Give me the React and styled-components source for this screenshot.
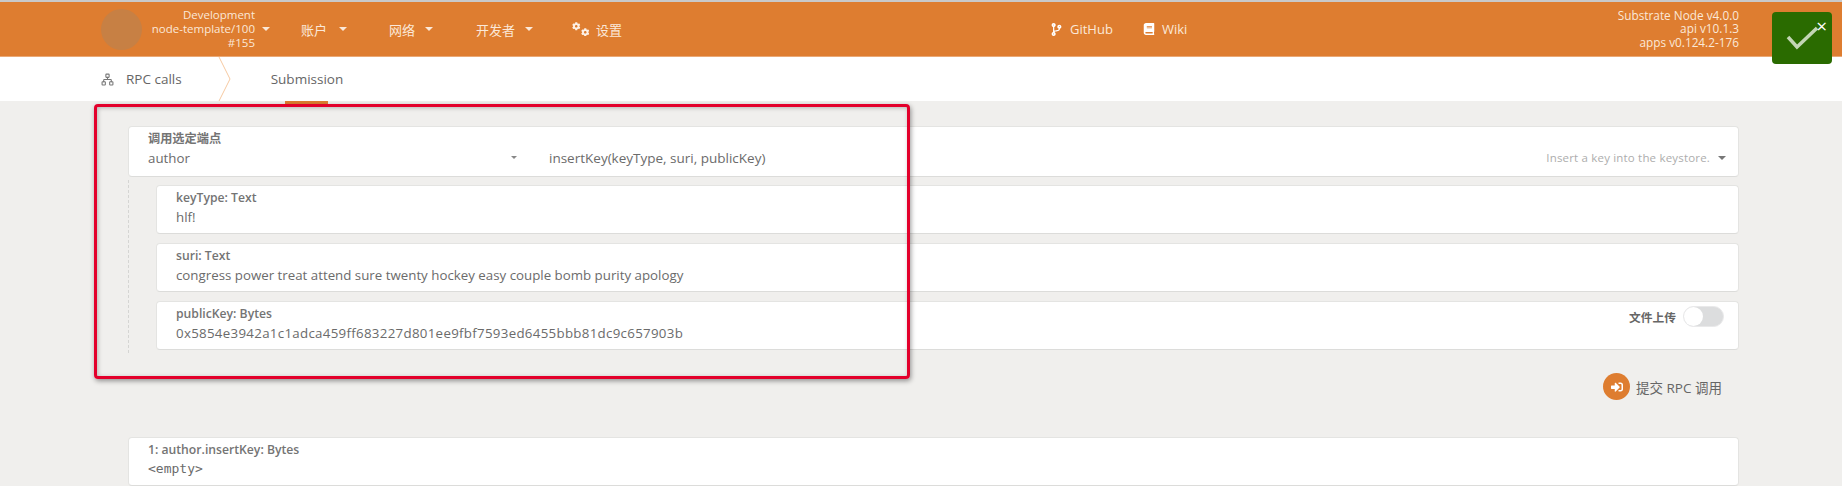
import React from 'react';
import styled, {createGlobalStyle} from 'styled-components';
import {FaBook, FaCodeBranch, FaCog, FaSignInAlt} from 'react-icons/fa';
import {Network} from 'lucide-react';

const GlobalStyle = createGlobalStyle`
    html, body {
        margin: 0;
        height: 486px;
        overflow: hidden;
        background: #f0efed;
        font-family: "Open Sans", "Noto Sans CJK SC", sans-serif;
        color: #6b6b6b;
    }
`

const Page = styled.div`
    position: relative;
    width: 1842px;
    height: 486px;
    overflow: hidden;
`

const Header = styled.header`
    display: flex;
    align-items: center;
    height: 54px;
    padding-left: 101px;
    border-top: 2px solid #c9c9c9;
    border-bottom: 1px solid #eaa976;
    background: #de7d30;
    color: #fbe8d8;
    font-size: 13px;
`

const Avatar = styled.div`
    width: 41px;
    height: 41px;
    border-radius: 50%;
    background: #c78044;
    flex: none;
`

const ChainInfo = styled.div`
    width: 113px;
    text-align: right;
    font-size: 11.5px;
    line-height: 14px;
`

const Caret = styled.span`
    display: inline-block;
    flex: none;
    width: 0;
    height: 0;
    margin-left: ${p => p.$gap || 0}px;
    margin-bottom: ${p => p.$bottom || 0}px;
    border-left: ${p => p.$size || 4.5}px solid transparent;
    border-right: ${p => p.$size || 4.5}px solid transparent;
    border-top: ${p => p.$size || 4.5}px solid ${p => p.$color || '#fbe8d8'};
`

const NavItem = styled.div`
    display: flex;
    align-items: center;
    flex: none;
    width: ${p => p.$width}px;
    gap: 7px;
    font-size: 13px;
`

const Gears = styled.span`
    display: flex;
    justify-content: space-between;
    width: 17px;
    height: 14px;
    color: #fdf1e6;

    svg:first-child {
        align-self: flex-start;
    }

    svg:last-child {
        align-self: flex-end;
    }
`

const Spacer = styled.div`
    width: ${p => p.$width}px;
    flex: none;
`

const Versions = styled.div`
    width: 551px;
    flex: none;
    text-align: right;
    font-size: 11.8px;
    line-height: 13.5px;
`

const Tabs = styled.nav`
    display: flex;
    align-items: center;
    height: 44px;
    padding-left: 101px;
    background: #fff;
    font-size: 13.5px;
    color: #666;
`

const Tab = styled.div`
    position: relative;
    display: flex;
    align-items: center;
    height: 100%;
    gap: 12px;
    margin-left: ${p => p.$offset || 0}px;

    ${p => p.$active && `
        &::after {
            content: "";
            position: absolute;
            left: 14px;
            right: 15px;
            bottom: -3px;
            height: 3px;
            background: #de7d30;
        }
    `}
`

const Chevron = styled.svg`
    flex: none;
    width: 13px;
    height: 44px;
    margin-left: 36px;
`

const Main = styled.main`
    padding: 25px 103px 0 128px;
`

const Card = styled.div`
    position: relative;
    box-sizing: border-box;
    height: ${p => p.$height || 49}px;
    padding: 4px 16px 0 19px;
    border: 1px solid #e4e4e2;
    border-bottom-color: #dcdcda;
    border-radius: 4px;
    background: #fff;
`

const Label = styled.div`
    font-size: 12.2px;
    font-weight: 600;
    line-height: 16px;
    color: #747474;
`

const Value = styled.div`
    margin-top: 1px;
    font-size: 13.3px;
    line-height: 20px;
    color: #6b6b6b;
`

const Hash = styled(Value)`
    letter-spacing: 0.3px;
`

const Mono = styled(Value)`
    font-family: "DejaVu Sans Mono", "Liberation Mono", monospace;
    font-size: 13px;
`

const SelectRow = styled.div`
    display: flex;
    align-items: flex-end;
    margin-right: -4px;
`

const Section = styled.div`
    width: 363px;
    flex: none;
`

const Method = styled(Value)`
    flex: 1;
    margin-top: 0;
    font-size: 13.5px;
`

const Hint = styled.span`
    margin-right: 8px;
    font-size: 11.5px;
    line-height: 20px;
    letter-spacing: 0.18px;
    color: #adadad;
`

const Params = styled.div`
    display: flex;
    flex-direction: column;
    gap: 9px;
    margin-top: 3px;
    padding: 5px 0 3px 27px;
    border-left: 1px dashed #d5d5d3;
`

const SwitchRow = styled.div`
    position: absolute;
    top: 4px;
    right: 14px;
    display: flex;
    align-items: center;
    gap: 7px;
    font-size: 11.75px;
    font-weight: 600;
    color: #666;
`

const Switch = styled.div`
    position: relative;
    box-sizing: border-box;
    width: 41px;
    height: 21px;
    border: 1px solid #e9e9ea;
    border-radius: 11px;
    background: #dcddde;

    &::before {
        content: "";
        position: absolute;
        left: 0;
        top: 0;
        width: 19px;
        height: 19px;
        border-radius: 50%;
        background: #fff;
    }
`

const Actions = styled.div`
    display: flex;
    justify-content: flex-end;
    align-items: center;
    gap: 6px;
    margin-top: 20px;
    padding-right: 17px;
    font-size: 13.5px;
    color: #666;
`

const RoundIcon = styled.div`
    display: flex;
    align-items: center;
    justify-content: center;
    width: 27px;
    height: 27px;
    border-radius: 50%;
    background: #de7d30;
    color: #fff;
    font-size: 12px;
`

const Result = styled(Card)`
    margin-top: 37px;
`

const Highlight = styled.div`
    position: absolute;
    left: 94px;
    top: 104px;
    width: 816px;
    height: 275px;
    box-sizing: border-box;
    border: 3px solid #e3002b;
    border-radius: 4px;
    box-shadow: 1px 2px 5px rgba(0, 0, 0, 0.4), inset 1px 1px 4px rgba(0, 0, 0, 0.25);
    pointer-events: none;
`

const Toast = styled.div`
    position: absolute;
    left: 1772px;
    top: 12px;
    width: 60px;
    height: 52px;
    border-radius: 4px;
    background: #2a6b00;
`

const Close = styled.span`
    position: absolute;
    top: 4px;
    right: 5px;
    font-size: 19px;
    line-height: 20px;
    color: #fff;
`

const App = () => {
    return (
        <Page>
            <GlobalStyle/>
            <Header>
                <Avatar/>
                <ChainInfo>
                    <div>Development</div>
                    <div>node-template/100</div>
                    <div>#155</div>
                </ChainInfo>
                <Caret $gap={7}/>
                <Spacer $width={31}/>
                <NavItem $width={88}>账户<Caret $gap={5}/></NavItem>
                <NavItem $width={87}>网络<Caret $gap={3}/></NavItem>
                <NavItem $width={96}>开发者<Caret $gap={3}/></NavItem>
                <NavItem $width={478}><Gears><FaCog size={8.5}/><FaCog size={8.5}/></Gears>设置</NavItem>
                <NavItem $width={93}><FaCodeBranch size={13} color="#fff"/>GitHub</NavItem>
                <NavItem $width={45}><FaBook size={12} color="#fff"/>Wiki</NavItem>
                <Versions>
                    <div>Substrate Node v4.0.0</div>
                    <div>api v10.1.3</div>
                    <div>apps v0.124.2-176</div>
                </Versions>
            </Header>
            <Tabs>
                <Tab><Network size={13} color="#777" strokeWidth={2}/>RPC calls</Tab>
                <Chevron viewBox="0 0 13 44">
                    <path d="M1 0 L12 22 L1 44" fill="none" stroke="#f6c9a1" strokeWidth="1"/>
                </Chevron>
                <Tab $offset={40} $active>Submission</Tab>
            </Tabs>
            <Main>
                <Card $height={51}>
                    <SelectRow>
                        <Section>
                            <Label>调用选定端点</Label>
                            <Value>author</Value>
                        </Section>
                        <Caret $size={3.5} $color="#888" $bottom={9}/>
                        <Spacer $width={32}/>
                        <Method>insertKey(keyType, suri, publicKey)</Method>
                        <Hint>Insert a key into the keystore.</Hint>
                        <Caret $size={4} $color="#777" $bottom={8}/>
                    </SelectRow>
                </Card>
                <Params>
                    <Card>
                        <Label>keyType: Text</Label>
                        <Value>hlf!</Value>
                    </Card>
                    <Card>
                        <Label>suri: Text</Label>
                        <Value>congress power treat attend sure twenty hockey easy couple bomb purity apology</Value>
                    </Card>
                    <Card>
                        <Label>publicKey: Bytes</Label>
                        <Hash>0x5854e3942a1c1adca459ff683227d801ee9fbf7593ed6455bbb81dc9c657903b</Hash>
                        <SwitchRow>文件上传<Switch/></SwitchRow>
                    </Card>
                </Params>
                <Actions>
                    <RoundIcon><FaSignInAlt/></RoundIcon>
                    提交 RPC 调用
                </Actions>
                <Result>
                    <Label>1: author.insertKey: Bytes</Label>
                    <Mono>&lt;empty&gt;</Mono>
                </Result>
            </Main>
            <Highlight/>
            <Toast>
                <svg width="60" height="52" viewBox="0 0 60 52">
                    <path d="M16 25 L25 35 L45 16" fill="none" stroke="#c3d6b5" strokeWidth="3.5"/>
                </svg>
                <Close>×</Close>
            </Toast>
        </Page>
    );
};

export default App;
